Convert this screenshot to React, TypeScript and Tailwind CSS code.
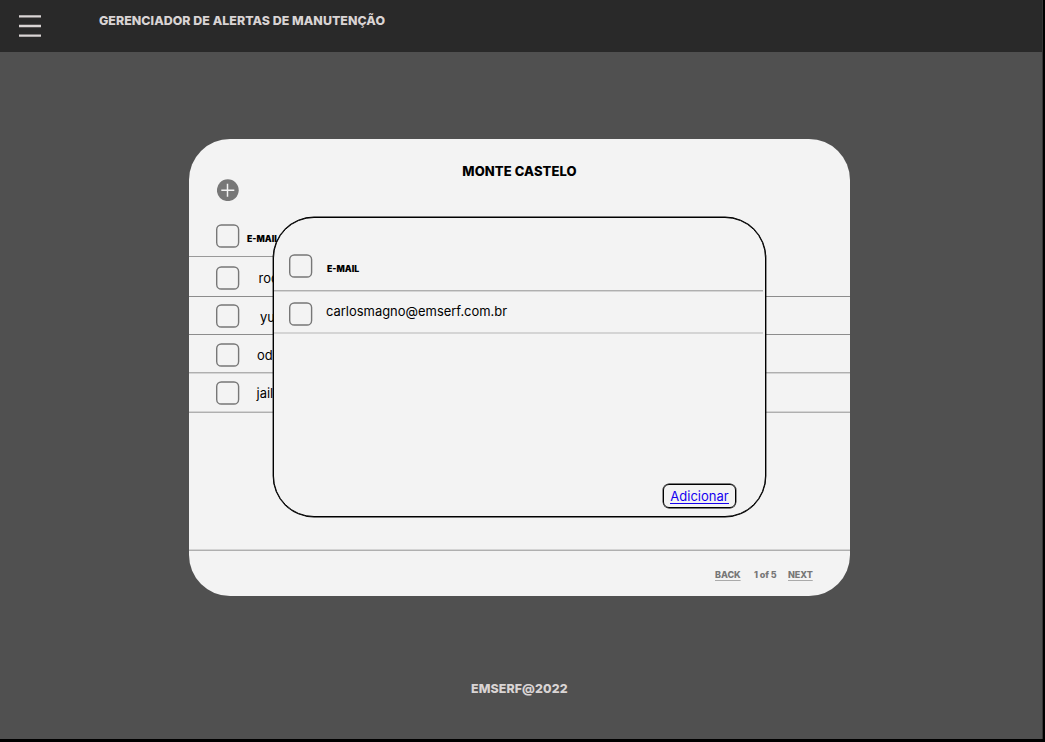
import React from "react";

function Checkbox({ className = "" }: { className?: string }) {
  return (
    <svg className={`block h-6 w-6 shrink-0 ${className}`} viewBox="0 0 24 24" fill="none" role="checkbox" aria-checked="false">
      <rect x="0.7" y="1" width="21.9" height="22" rx="4.6" stroke="#777777" strokeWidth="1.4" />
    </svg>
  );
}

function Row({ text, className, boxClass, textClass }: { text: string; className: string; boxClass: string; textClass: string }) {
  return (
    <div className={`flex shrink-0 items-start pl-[27px] ${className}`}>
      <Checkbox className={boxClass} />
      <span className={`text-[12.95px] leading-4 whitespace-nowrap text-black ${textClass}`}>{text}</span>
    </div>
  );
}

export default function App() {
  return (
    <div className="h-[742px] w-[1045px] overflow-hidden bg-black font-['Inter',sans-serif]">
      <div className="flex h-[739px] w-[1043px] flex-col border-r border-[#353535] bg-[#505050]">
        <header className="flex h-[52px] shrink-0 items-start bg-[#292929] pl-[19px]">
          <svg className="mt-[14px] block h-6 w-[22px] shrink-0" viewBox="0 0 22 24" aria-label="Menu">
            <path d="M0 2.4H22M0 12H22M0 21.7H22" stroke="#d9d4d4" strokeWidth="2.3" />
          </svg>
          <h1 className="mt-[13px] ml-[58px] text-[12.4px] leading-4 font-extrabold tracking-[0.04px] whitespace-nowrap text-[#d9d4d4]">
            GERENCIADOR DE ALERTAS DE MANUTENÇÃO
          </h1>
        </header>

        <main className="relative mt-[87px] ml-[189px] flex h-[457px] w-[661px] shrink-0 flex-col overflow-hidden rounded-[41px] bg-[#f3f3f3]">
          <h2 className="mt-6 h-4 shrink-0 text-center text-[13px] leading-4 font-extrabold tracking-[0.1px] text-black">MONTE CASTELO</h2>
          <svg className="ml-[28px] block h-[22px] w-[22px] shrink-0" viewBox="0 0 22 22" aria-label="Adicionar e-mail">
            <circle cx="10.8" cy="11.2" r="10.9" fill="#777777" />
            <path d="M4.3 11.2H17.3M10.5 4.7V17.7" stroke="#f3f3f3" strokeWidth="1.5" />
          </svg>
          <div className="mt-[23px] flex h-8 shrink-0 items-start pl-[27px]">
            <Checkbox />
            <span className="mt-[7px] ml-[7px] text-[8.7px] leading-4 font-black text-black">E-MAIL</span>
          </div>
          <div className="h-px w-[90px] shrink-0 bg-[#999999]" />
          <Row text="rod" className="h-[39px]" boxClass="mt-[9px]" textClass="mt-[13px] ml-[18.5px]" />
          <div className="h-px shrink-0 bg-[#8c8c8c]" />
          <Row text="yu" className="h-[37px]" boxClass="mt-[7px]" textClass="mt-[12px] ml-[20px]" />
          <div className="h-px shrink-0 bg-[#8c8c8c]" />
          <Row text="od" className="h-[37px]" boxClass="mt-[7.5px]" textClass="mt-[12px] ml-[17px]" />
          <div className="h-0.5 shrink-0 border-b border-[#d4d4d4] bg-[#afafaf]" />
          <Row text="jail" className="h-[37px]" boxClass="mt-[7px]" textClass="mt-[11px] ml-[16.5px]" />
          <div className="h-0.5 shrink-0 border-t border-[#d4d4d4] bg-[#afafaf]" />
          <div className="mt-auto h-0.5 shrink-0 border-t border-[#d4d4d4] bg-[#afafaf]" />
          <footer className="flex h-[45px] shrink-0 items-start pt-4 pl-[526px] text-[9px] leading-4 font-extrabold tracking-[-0.06px] whitespace-nowrap text-[#777777]">
            <a className="w-[39px] underline decoration-[#aaaaaa] underline-offset-2">BACK</a>
            <span className="w-[34px]">1 of 5</span>
            <a className="underline decoration-[#aaaaaa] underline-offset-2">NEXT</a>
          </footer>

          <section className="absolute top-[78px] left-[84px] flex h-[300px] w-[493px] flex-col rounded-[41px] border border-black bg-[#f3f3f3] shadow-[0_0_0_0.4px_#000]">
            <div className="flex h-[72px] shrink-0 items-start pl-[15px]">
              <Checkbox className="mt-9" />
              <span className="mt-[43px] ml-[14px] text-[8.7px] leading-4 font-black text-black">E-MAIL</span>
            </div>
            <div className="mr-0.5 h-0.5 shrink-0 border-b border-[#d4d4d4] bg-[#afafaf]" />
            <div className="flex h-10 shrink-0 items-start pl-[15px]">
              <Checkbox className="mt-[10px]" />
              <span className="mt-[11px] ml-[13px] text-[12.95px] leading-4 whitespace-nowrap text-black">carlosmagno@emserf.com.br</span>
            </div>
            <div className="mr-0.5 h-0.5 shrink-0 bg-[#d4d4d4]" />
            <button className="mt-auto mr-[29px] mb-2 flex h-6 w-[73px] items-start justify-center self-end rounded-[6px] border border-black pt-[3px] shadow-[0_0_0_0.4px_#000]">
              <span className="h-4 border-b border-[#1500f0] text-[13px] leading-4 whitespace-nowrap text-[#1500f0]">Adicionar</span>
            </button>
          </section>
        </main>

        <p className="mt-[85px] pl-[471px] text-[12.4px] leading-4 font-extrabold tracking-[0.1px] text-[#d9d4d4]">EMSERF@2022</p>
      </div>
    </div>
  );
}
